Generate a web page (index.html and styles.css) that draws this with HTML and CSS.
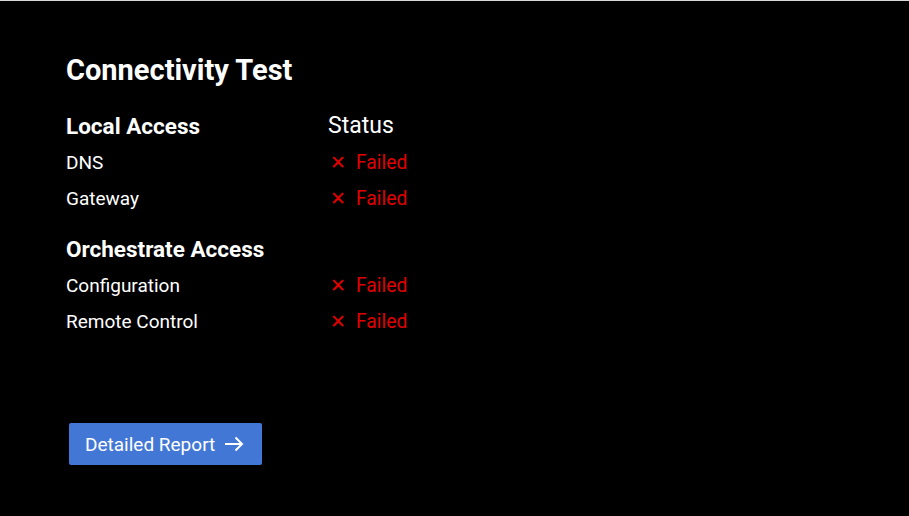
FILE: index.html
```html
<!DOCTYPE html>
<html lang="en">
<head>
    <meta charset="UTF-8">
    <meta name="viewport" content="width=device-width, initial-scale=1.0">
    <link rel="stylesheet" href="styles.css">
    <title>Connectivity Test</title>
</head>
<body>
    <div class="page">
        <h1 class="title">Connectivity Test</h1>

        <div class="table">
            <div class="section">Local Access</div>
            <div class="head">Status</div>

            <div class="item">DNS</div>
            <div class="status"><span class="cross">&#x2715;</span>Failed</div>

            <div class="item">Gateway</div>
            <div class="status"><span class="cross">&#x2715;</span>Failed</div>

            <div class="section second">Orchestrate Access</div>
            <div class="head second"></div>

            <div class="item">Configuration</div>
            <div class="status"><span class="cross">&#x2715;</span>Failed</div>

            <div class="item">Remote Control</div>
            <div class="status"><span class="cross">&#x2715;</span>Failed</div>
        </div>

        <button class="report">
            Detailed Report
            <svg class="arrow" width="20" height="20" viewBox="0 0 20 20">
                <path d="M1 10 H18 M11.5 3.5 L18 10 L11.5 16.5" fill="none" stroke="white" stroke-width="2"/>
            </svg>
        </button>
    </div>
</body>
</html>
```

FILE: styles.css
```css
body{
    margin: 0;
    padding: 0;
    background-color: #000;
    font-family: Roboto, "Liberation Sans", sans-serif;
    color: #fff;
}
.page{
    width: 909px;
    height: 516px;
    box-sizing: border-box;
    border-top: 1px solid #d8d8d8;
    padding: 51px 0 0 66px;
}
.title{
    margin: 0;
    font-size: 29px;
    font-weight: 700;
    line-height: 36px;
}
.table{
    margin-top: 19px;
    display: grid;
    grid-template-columns: 262px auto;
    align-items: center;
}
.section{
    font-size: 22.5px;
    font-weight: 700;
    line-height: 38px;
}
.head{
    font-size: 23px;
    line-height: 38px;
}
.second{
    margin-top: 13px;
}
.item{
    font-size: 19px;
    line-height: 36px;
}
.status{
    font-size: 19.3px;
    line-height: 36px;
    color: #e00000;
    display: flex;
    align-items: center;
}
.cross{
    font-size: 19px;
    margin-left: 2px;
    margin-right: 10px;
}
.report{
    margin-top: 83px;
    margin-left: 3px;
    width: 193px;
    height: 42px;
    padding: 0 0 0 16px;
    border: 0;
    border-radius: 2px;
    background-color: #4377d6;
    color: #fff;
    font-family: Roboto, "Liberation Sans", sans-serif;
    font-size: 19px;
    display: flex;
    align-items: center;
    gap: 9px;
}
.arrow{
    display: block;
}
```
